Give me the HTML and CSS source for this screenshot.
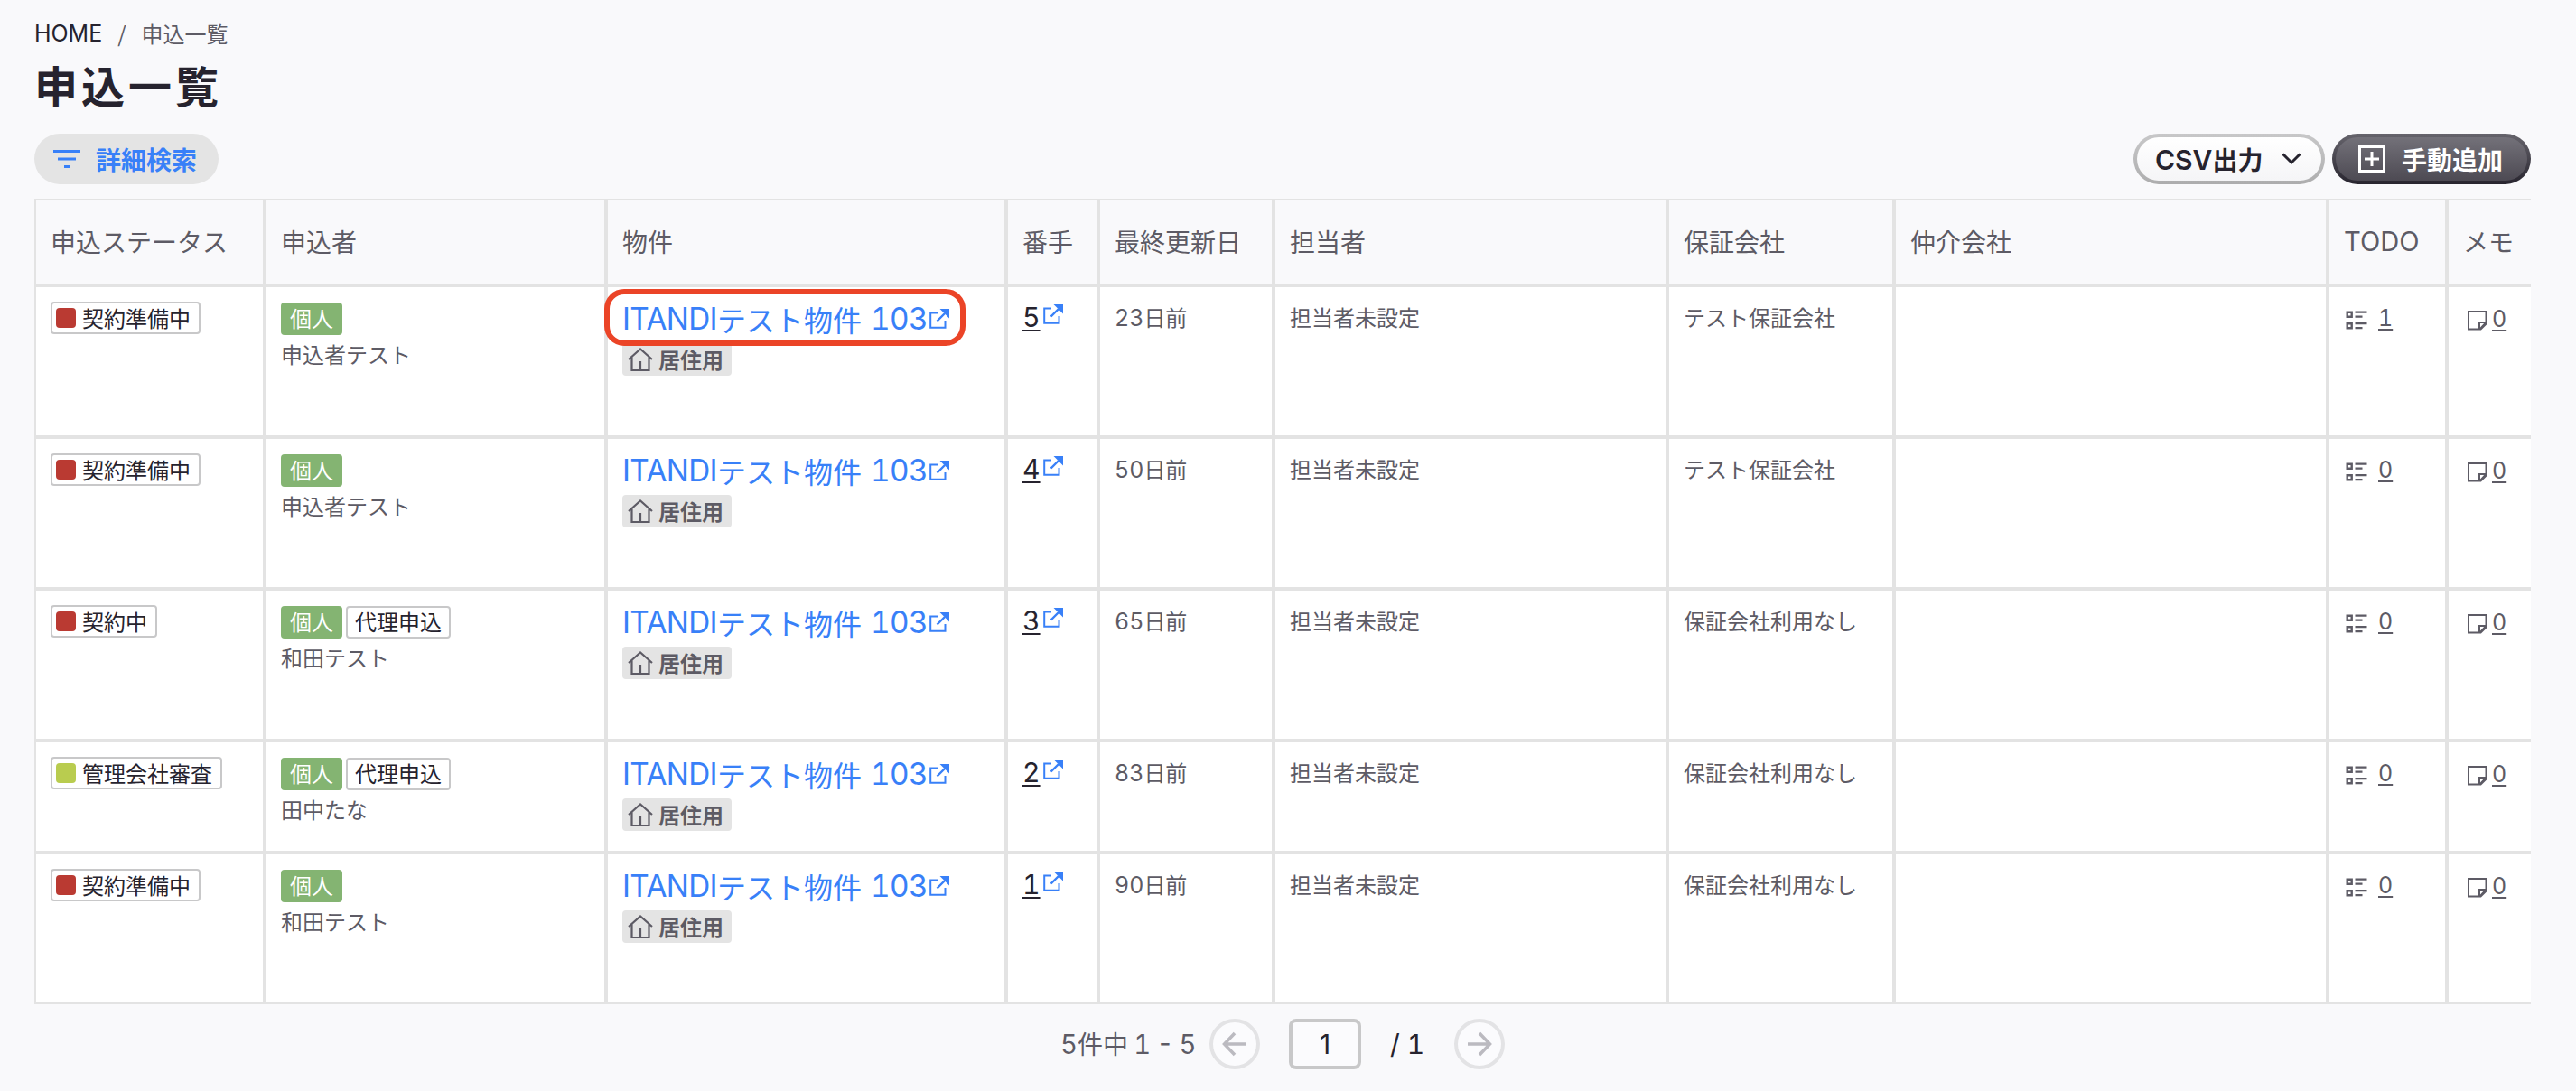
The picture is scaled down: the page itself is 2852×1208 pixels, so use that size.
FILE: index.html
```
<!DOCTYPE html>
<html lang="ja">
<head>
  <meta charset="UTF-8" />
  <title>申込一覧</title>
  <link rel="stylesheet" href="styles.css">
</head>
<body>

  <!-- Shared icons -->
  <svg class="sprite">
    <symbol id="icon-link" viewBox="0 0 22 22">
      <path d="M9 4.500H1.200v16.300h16.300V13" fill="none" stroke="currentColor" stroke-width="2"/>
      <path d="M8.500 13.500 17 5" fill="none" stroke="currentColor" stroke-width="2.400"/>
      <path d="M11.500 0H22v10.500z" fill="currentColor"/>
    </symbol>
    <symbol id="icon-house" viewBox="0 0 28 28">
      <path d="M1 14 14 2.500 27 14M4.500 11.500v14.500h19V11.500M14 26V16" fill="none" stroke="currentColor" stroke-width="2.200"/>
    </symbol>
    <symbol id="icon-list" viewBox="0 0 24 22">
      <path d="M1.700 1.700h5v5h-5zM1.700 14.200h5v5h-5z" fill="none" stroke="currentColor" stroke-width="2.400"/>
      <path d="M10.500 1.700h13M10.500 6.700h8M10.500 14.200h13M10.500 19.200h8" fill="none" stroke="currentColor" stroke-width="2.200"/>
    </symbol>
    <symbol id="icon-memo" viewBox="0 0 24 24">
      <path d="M2 2h19.500v13.500l-6 6H2zM14 21.500V14h7.500M15 21l6-6.500" fill="none" stroke="currentColor" stroke-width="2"/>
    </symbol>
  </svg>

  <div class="breadcrumb"><a class="latin">HOME</a><span>/</span><span>申込一覧</span></div>
  <h1>申込一覧</h1>

  <div class="toolbar">
    <button class="btn btn-search">
      <svg width="30" height="21" viewBox="0 0 30 21"><path d="M0 1.500h30M5 10h20M12 18.500h6" stroke="currentColor" stroke-width="3"/></svg>
      詳細検索
    </button>
    <div class="actions">
      <button class="btn btn-csv">
        <span><span class="csv">CSV</span>出力</span>
        <svg width="22" height="14" viewBox="0 0 22 14"><path d="M1.500 1.500 11 11l9.500-9.500" fill="none" stroke="currentColor" stroke-width="3"/></svg>
      </button>
      <button class="btn btn-add">
        <svg width="30" height="30" viewBox="0 0 30 30"><path d="M1.500 1.500h27v27h-27zM15 7v16M7 15h16" fill="none" stroke="currentColor" stroke-width="3"/></svg>
        手動追加
      </button>
    </div>
  </div>

  <div class="table" id="table">
    <div class="row head">
      <div class="cell">申込ステータス</div>
      <div class="cell">申込者</div>
      <div class="cell">物件</div>
      <div class="cell">番手</div>
      <div class="cell">最終更新日</div>
      <div class="cell">担当者</div>
      <div class="cell">保証会社</div>
      <div class="cell">仲介会社</div>
      <div class="cell"><span class="latin">TODO</span></div>
      <div class="cell">メモ</div>
    </div>
  </div>

  <div class="pager">
    <span class="count"><span class="latin">5</span>件中<span class="latin"> 1 - 5</span></span>
    <button class="arrow"><svg width="28" height="28" viewBox="0 0 28 28"><path d="M27 14H3M14 2 2.500 14 14 26" fill="none" stroke="currentColor" stroke-width="3.500"/></svg></button>
    <input class="page" type="text" value="1" />
    <span class="total">/ 1</span>
    <button class="arrow"><svg width="28" height="28" viewBox="0 0 28 28"><path d="M1 14h24M14 2l11.500 12L14 26" fill="none" stroke="currentColor" stroke-width="3.500"/></svg></button>
  </div>

  <script>
    const rows = [
      { status: "契約準備中", color: "red", proxy: false, name: "申込者テスト", order: 5, days: 23, company: "テスト保証会社", todo: 1, memo: 0, marked: true },
      { status: "契約準備中", color: "red", proxy: false, name: "申込者テスト", order: 4, days: 50, company: "テスト保証会社", todo: 0, memo: 0 },
      { status: "契約中", color: "red", proxy: true, name: "和田テスト", order: 3, days: 65, company: "保証会社利用なし", todo: 0, memo: 0 },
      { status: "管理会社審査", color: "lime", proxy: true, name: "田中たな", order: 2, days: 83, company: "保証会社利用なし", todo: 0, memo: 0, short: true },
      { status: "契約準備中", color: "red", proxy: false, name: "和田テスト", order: 1, days: 90, company: "保証会社利用なし", todo: 0, memo: 0 }
    ];

    const icon = name => `<svg class="icon ${name}"><use href="#icon-${name}"/></svg>`;
    const table = document.getElementById("table");

    for (const r of rows) {
      const row = document.createElement("div");
      row.className = "row" + (r.short ? " short" : "");
      row.innerHTML = `
        <div class="cell"><span class="status"><i class="dot ${r.color}"></i>${r.status}</span></div>
        <div class="cell">
          <div class="tags"><span class="tag person">個人</span>${r.proxy ? '<span class="tag proxy">代理申込</span>' : ""}</div>
          <div class="name">${r.name}</div>
        </div>
        <div class="cell">
          <a class="property"><span class="latin">ITANDI</span>テスト物件<span class="latin room">103</span>${icon("link")}</a>
          <span class="usage">${icon("house")}居住用</span>
          ${r.marked ? '<div class="marker"></div>' : ""}
        </div>
        <div class="cell order"><a class="latin">${r.order}</a>${icon("link")}</div>
        <div class="cell"><span class="latin">${r.days}</span>日前</div>
        <div class="cell">担当者未設定</div>
        <div class="cell">${r.company}</div>
        <div class="cell"></div>
        <div class="cell todo">${icon("list")}<a class="latin">${r.todo}</a></div>
        <div class="cell memo">${icon("memo")}<a class="latin">${r.memo}</a></div>`;
      table.appendChild(row);
    }
  </script>
</body>
</html>
```
FILE: styles.css
```
* {
  box-sizing: border-box;
}

body {
  margin: 0;
  padding: 20px 50px 0 38px;
  font-family: 'Noto Sans CJK JP', sans-serif;
  font-size: 24px;
  line-height: 34px;
  color: #5d5b65;
  background: #f9f9fb;
}

.sprite {
  display: none;
}

.latin {
  font-family: Inter, sans-serif;
  font-weight: 400;
  font-size: 1.04em;
  font-variant-numeric: tabular-nums;
}

.breadcrumb {
  display: flex;
  gap: 17px;
}

.breadcrumb a {
  color: #26232e;
}

h1 {
  margin: 7px 0 0;
  font-size: 48px;
  line-height: 64px;
  letter-spacing: 4px;
  color: #26232e;
}

.toolbar {
  display: flex;
  justify-content: space-between;
  margin: 23px 0 16px;
}

.actions {
  display: flex;
  gap: 8px;
}

.btn {
  display: flex;
  align-items: center;
  height: 56px;
  padding: 0;
  border: none;
  border-radius: 28px;
  font: bold 28px/52px 'Noto Sans CJK JP', sans-serif;
}

.btn-search {
  width: 204px;
  padding-left: 21px;
  gap: 17px;
  color: #3880f8;
  background: #e4e4e4;
}

.btn-csv {
  width: 212px;
  padding-left: 20px;
  gap: 21px;
  color: #26232e;
  border: 4px solid transparent;
  background: linear-gradient(#fff, #f5f5f7) padding-box, linear-gradient(#c8c8c9, #adadae) border-box;
}

.csv {
  font-family: Inter, sans-serif;
  font-weight: 600;
  font-size: 30px;
}

.btn-add {
  width: 220px;
  padding-left: 25px;
  gap: 18px;
  color: #fff;
  border: 4px solid transparent;
  background: linear-gradient(#737179, #4d4a53) padding-box, linear-gradient(#66646c, #28252f) border-box;
}

.row {
  display: grid;
  grid-template-columns: 255px 378px 443px 102px 194px 436px 251px 480px 132px 1fr;
  height: 168px;
  background: #fff;
}

.cell {
  position: relative;
  padding: 16px 16px 0;
  border: 2px solid #e3e3e3;
  white-space: nowrap;
}

.cell:last-child {
  border-right: none;
}

.head {
  height: 96px;
  font-size: 28px;
  background: #f9f9fb;
}

.head .cell {
  display: flex;
  align-items: center;
  padding: 0 16px 2px;
}

.head .latin {
  padding-top: 2px;
}

.short {
  height: 124px;
}

.status,
.tag,
.usage {
  display: inline-flex;
  align-items: center;
  height: 36px;
  border-radius: 4px;
}

.status {
  padding: 0 9px 1px 4px;
  border: 2px solid #c8c8c9;
  line-height: 30px;
  color: #26232e;
}

.dot {
  width: 22px;
  height: 22px;
  margin: 1px 7px 0 0;
  border-radius: 4px;
}

.red {
  background: #ba3a32;
}

.lime {
  background: #b9cc4f;
}

.tags {
  display: flex;
  gap: 4px;
  padding-top: 1px;
}

.tag {
  padding: 0 10px 2px;
}

.person {
  color: #fff;
  background: #84b472;
}

.proxy {
  padding: 0 8px 2px;
  border: 2px solid #c8c8c9;
  color: #26232e;
}

.name {
  margin-top: 4px;
}

.property {
  display: flex;
  align-items: center;
  height: 40px;
  margin-top: -1px;
  font-size: 32px;
  color: #3880f8;
}

.property .latin {
  letter-spacing: -0.6px;
}

.property .room {
  margin: 0 2px 0 10px;
}

.icon.link {
  width: 22px;
  height: 22px;
  color: #3880f8;
}

.icon.house {
  width: 28px;
  height: 28px;
  margin-right: 6px;
}

.icon.list {
  width: 24px;
  height: 22px;
}

.icon.memo {
  width: 24px;
  height: 24px;
}

.usage {
  margin-top: 7px;
  padding: 0 9px 1px 6px;
  font-weight: bold;
  background: #e4e4e4;
}

/* red frame drawn over the first property link */
.marker {
  position: absolute;
  left: -4px;
  top: 2px;
  width: 400px;
  height: 63px;
  border: 6px solid #eb4427;
  border-radius: 22px;
}

.order {
  display: flex;
  align-items: flex-start;
  font-size: 29px;
}

.order a {
  margin-right: 3px;
  color: #26232e;
}

.order .icon {
  margin-top: 3px;
}

.order a,
.todo a,
.memo a {
  text-decoration: underline;
  text-decoration-thickness: 2px;
  text-underline-offset: 3px;
}

.todo,
.memo {
  display: flex;
  align-items: flex-start;
}

.todo .icon {
  margin: 10px 12px 0 2px;
}

.memo .icon {
  margin: 9px 4px 0 4px;
}

.todo a {
  margin-top: 1px;
}

.memo a {
  margin-top: 2px;
}

.pager {
  display: flex;
  align-items: center;
  height: 88px;
  padding-left: 1136px;
  font-size: 28px;
}

.arrow {
  display: flex;
  align-items: center;
  justify-content: center;
  width: 56px;
  height: 56px;
  padding: 0;
  border: 4px solid #e3e3e5;
  border-radius: 50%;
  color: #bbbac0;
  background: #fbfbfd;
}

.count {
  width: 165px;
  white-space: pre;
}

.count .latin {
  word-spacing: -1.5px;
}

.page {
  width: 80px;
  height: 56px;
  margin: 0 32px;
  padding: 0;
  border: 4px solid #c8c8c9;
  border-radius: 8px;
  font: 400 30px Inter, sans-serif;
  text-align: center;
  color: #26232e;
  background: #fbfbfd;
}

.total {
  width: 71px;
  font: 400 30px Inter, sans-serif;
  font-variant-numeric: tabular-nums;
  color: #26232e;
}
```
